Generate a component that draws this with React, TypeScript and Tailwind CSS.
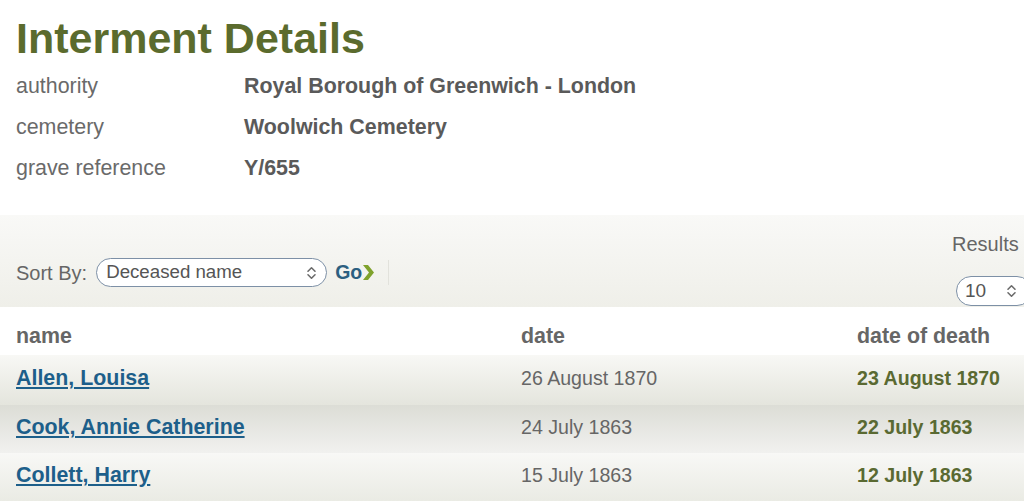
const details = [
  { label: "authority", value: "Royal Borough of Greenwich - London" },
  { label: "cemetery", value: "Woolwich Cemetery" },
  { label: "grave reference", value: "Y/655" },
];

const records = [
  { name: "Allen, Louisa", date: "26 August 1870", death: "23 August 1870", bg: "h-[50px] bg-gradient-to-b from-[#f8f8f5] to-[#e4e5dd]" },
  { name: "Cook, Annie Catherine", date: "24 July 1863", death: "22 July 1863", bg: "h-[48px] bg-gradient-to-b from-[#dcddd6] to-[#f1f1ef]" },
  { name: "Collett, Harry", date: "15 July 1863", death: "12 July 1863", bg: "h-[48px] bg-gradient-to-b from-[#f8f8f6] to-[#eaebe4]" },
];

function UpDown() {
  return (
    <svg width="11" height="14" viewBox="0 0 11 14" fill="none" stroke="#6b6b6b" strokeWidth="1.6" strokeLinecap="round" strokeLinejoin="round">
      <path d="M2 5.2 5.5 1.8 9 5.2" />
      <path d="M2 8.8 5.5 12.2 9 8.8" />
    </svg>
  );
}

export default function App() {
  return (
    <div className="h-[501px] w-[1024px] overflow-hidden bg-white font-['Liberation_Sans',Arial,sans-serif]">
      <h1 className="pl-4 pt-[17px] text-[43px] font-bold leading-[43px] text-[#5b6b2d]">
        Interment Details
      </h1>

      <div className="mt-[6px]">
        {details.map((d) => (
          <div key={d.label} className="grid h-[41px] grid-cols-[228px_1fr] items-center pl-4 text-[21.4px] leading-[41px]">
            <span className="text-[#6a6a6a]">{d.label}</span>
            <span className="font-bold text-[#5a5a5a]">{d.value}</span>
          </div>
        ))}
      </div>

      <div className="mt-[26px] flex h-[92px] bg-gradient-to-b from-[#f9f9f7] to-[#efefe9] pl-4">
        <div className="mt-[43px] flex h-[29px] items-center">
          <span className="text-[20px] text-[#666]">Sort By:</span>
          <div className="ml-[9px] flex h-[29px] w-[231px] items-center justify-between rounded-full border-[1.5px] border-[#7d90a6] bg-white pl-[9px] pr-[9px]">
            <span className="text-[18.7px] text-[#555]">Deceased name</span>
            <UpDown />
          </div>
          <span className="ml-[8px] text-[19.5px] font-bold text-[#2c5f80]">Go</span>
          <svg width="13" height="17" viewBox="0 0 13 17">
            <path d="M1 1h5l6 7.5-6 7.5H1l6-7.5z" fill="#7fa22c" />
          </svg>
          <div className="ml-[13px] h-[25px] w-px bg-[#e2e2dc]" />
        </div>

        <div className="ml-auto mt-[18px] flex w-[72px] shrink-0 flex-col">
          <span className="text-[20px] leading-[22px] text-[#666]">Results</span>
          <div className="ml-[4px] mt-[21px] flex h-[30px] w-[76px] shrink-0 items-center justify-between rounded-full border-[1.5px] border-[#7d90a6] bg-white pl-[8px] pr-[14px]">
            <span className="text-[19px] text-[#555]">10</span>
            <UpDown />
          </div>
        </div>
      </div>

      <div className="grid h-[48px] grid-cols-[505px_336px_1fr] pl-4 pt-[17px] text-[21.4px] font-bold leading-[24px] text-[#666]">
        <span>name</span>
        <span>date</span>
        <span>date of death</span>
      </div>

      {records.map((r) => (
        <div key={r.name} className={`grid grid-cols-[505px_336px_1fr] items-center pb-[3px] pl-4 ${r.bg}`}>
          <a href="#" className="text-[21.4px] font-bold text-[#1d5f8a] underline underline-offset-2">
            {r.name}
          </a>
          <span className="text-[19.6px] text-[#666]">{r.date}</span>
          <span className="text-[19.6px] font-bold text-[#5a6a32]">{r.death}</span>
        </div>
      ))}
    </div>
  );
}
